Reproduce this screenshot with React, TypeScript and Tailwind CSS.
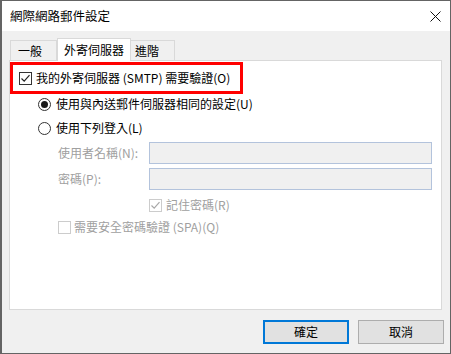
import React from "react";

const font = { fontFamily: '"Noto Sans CJK TC", "Liberation Sans", sans-serif' };

const CheckBox = ({ checked, disabled }: { checked?: boolean; disabled?: boolean }) => (
  <span
    className={`flex size-[13px] shrink-0 items-center justify-center border bg-white ${
      disabled ? "border-[#cccccc]" : "border-[#333333]"
    }`}
  >
    {checked && (
      <svg width="11" height="11" viewBox="0 0 11 11">
        <path
          d="M1.5 5.5 L4.2 8.2 L9.5 2.2"
          fill="none"
          stroke={disabled ? "#a8a8a8" : "#222222"}
          strokeWidth="1.2"
        />
      </svg>
    )}
  </span>
);

const Radio = ({ checked }: { checked?: boolean }) => (
  <span className="flex size-[13px] shrink-0 items-center justify-center rounded-full border border-[#333333] bg-white">
    {checked && <span className="size-[7px] rounded-full bg-[#1a1a1a]" />}
  </span>
);

export default function App() {
  return (
    <div
      className="flex h-[354px] w-[451px] flex-col overflow-hidden border border-l-2 border-[#646464] bg-[#f0f0f0] text-[12px] leading-none text-black"
      style={font}
    >
      <div className="flex h-[30px] items-center justify-between bg-white pl-[8px] pr-[9px]">
        <span className="text-[12.5px]">網際網路郵件設定</span>
        <svg width="11" height="11" viewBox="0 0 11 11">
          <path d="M0.5 0.5 L10.5 10.5 M10.5 0.5 L0.5 10.5" stroke="#111" strokeWidth="1" />
        </svg>
      </div>

      <div className="flex h-[29px] items-end pl-[8px] pt-[6px]">
        <div className="flex h-[20px] w-[47px] items-center border border-b-0 border-[#d9d9d9] bg-[#f0f0f0] pl-[7px]">
          一般
        </div>
        <div className="relative z-10 -mb-px flex h-[23px] w-[74px] items-center border border-b-0 border-[#d9d9d9] bg-white pl-[6px]">
          外寄伺服器
        </div>
        <div className="flex h-[20px] w-[44px] items-center border border-b-0 border-l-0 border-[#d9d9d9] bg-[#f0f0f0] pl-[4px]">
          進階
        </div>
      </div>

      <div className="ml-[7px] flex h-[250px] w-[433px] flex-col border border-[#d9d9d9] bg-white">
        <div className="ml-0 mt-px flex h-[32px] w-[233px] items-center border-[3px] border-[#ff0000] pl-[6px]">
          <CheckBox checked />
          <span className="ml-[4px]">我的外寄伺服器 (SMTP) 需要驗證(O)</span>
        </div>

        <div className="ml-[28px] mt-[2px] flex h-[16px] items-center">
          <Radio checked />
          <span className="ml-[5px]">使用與內送郵件伺服器相同的設定(U)</span>
        </div>
        <div className="ml-[28px] mt-[8px] flex h-[16px] items-center">
          <Radio />
          <span className="ml-[5px]">使用下列登入(L)</span>
        </div>

        <div className="mt-[6px] flex h-[22px] items-center">
          <span className="w-[139px] pl-[48px] text-[#a0a0a0]">使用者名稱(N):</span>
          <div className="h-[22px] w-[283px] border border-[#b3c3dc] bg-[#f0f0f0]" />
        </div>
        <div className="mt-[4px] flex h-[22px] items-center">
          <span className="w-[139px] pl-[48px] text-[#a0a0a0]">密碼(P):</span>
          <div className="h-[22px] w-[283px] border border-[#b3c3dc] bg-[#f0f0f0]" />
        </div>

        <div className="ml-[139px] mt-[8px] flex h-[14px] items-center">
          <CheckBox checked disabled />
          <span className="ml-[4px] text-[#a0a0a0]">記住密碼(R)</span>
        </div>
        <div className="ml-[48px] mt-[8px] flex h-[14px] items-center">
          <CheckBox disabled />
          <span className="ml-[3px] text-[#a0a0a0]">需要安全密碼驗證 (SPA)(Q)</span>
        </div>
      </div>

      <div className="flex justify-end gap-[9px] pr-[6px] pt-[10px]">
        <button className="flex h-[24px] w-[86px] items-center justify-center border-2 border-[#0078d7] bg-[#e1e1e1]">
          確定
        </button>
        <button className="flex h-[24px] w-[86px] items-center justify-center border border-[#adadad] bg-[#e1e1e1]">
          取消
        </button>
      </div>
    </div>
  );
}
